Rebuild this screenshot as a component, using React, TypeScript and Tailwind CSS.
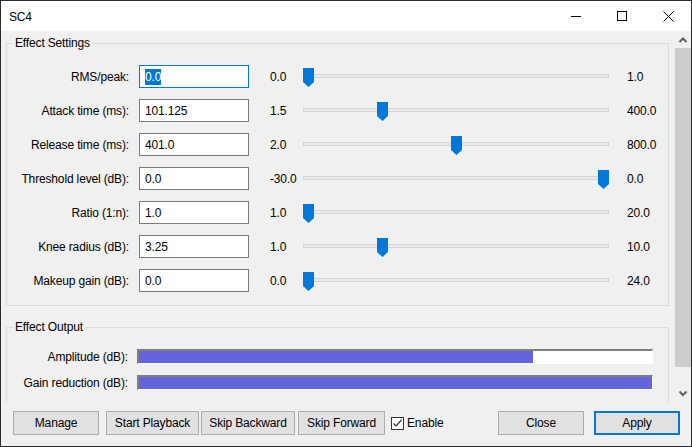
import React from "react";

type Row = { label: string; value: string; min: string; max: string; frac: number; focused?: boolean };

const rows: Row[] = [
  { label: "RMS/peak:", value: "0.0", min: "0.0", max: "1.0", frac: 0, focused: true },
  { label: "Attack time (ms):", value: "101.125", min: "1.5", max: "400.0", frac: 0.25 },
  { label: "Release time (ms):", value: "401.0", min: "2.0", max: "800.0", frac: 0.5 },
  { label: "Threshold level (dB):", value: "0.0", min: "-30.0", max: "0.0", frac: 1 },
  { label: "Ratio (1:n):", value: "1.0", min: "1.0", max: "20.0", frac: 0 },
  { label: "Knee radius (dB):", value: "3.25", min: "1.0", max: "10.0", frac: 0.25 },
  { label: "Makeup gain (dB):", value: "0.0", min: "0.0", max: "24.0", frac: 0 },
];

const Slider: React.FC<{ frac: number }> = ({ frac }) => (
  <div className="relative w-[306px] h-[23px] shrink-0">
    <div className="absolute left-0 right-0 top-[9px] h-[4px] bg-[#e7eaea] border border-[#d6d6d6]" />
    <svg
      className="absolute top-[3px]"
      style={{ left: Math.round(frac * 295) }}
      width="11"
      height="19"
      viewBox="0 0 11 19"
    >
      <polygon points="0,0 11,0 11,14 5.5,19 0,14" fill="#0078d7" />
    </svg>
  </div>
);

const Meter: React.FC<{ label: string; frac: number }> = ({ label, frac }) => (
  <div className="flex items-center h-[15px]">
    <div className="w-[121px] text-right whitespace-nowrap">{label}</div>
    <div className="ml-[9px] w-[516px] h-[15px] border-t-2 border-l-2 border-t-[#7f7f7f] border-l-[#7f7f7f] border-b border-r border-b-white border-r-white bg-white flex">
      <div className="h-full bg-[#6464dc]" style={{ width: `${frac * 100}%` }} />
    </div>
  </div>
);

const Btn: React.FC<{ w: string; children: React.ReactNode; primary?: boolean }> = ({ w, children, primary }) => (
  <button
    className={`${w} h-[24px] shrink-0 bg-[#e1e1e1] flex items-center justify-center ${
      primary ? "border-2 border-[#0078d7]" : "border border-[#adadad]"
    }`}
  >
    {children}
  </button>
);

const Chevron: React.FC<{ up?: boolean }> = ({ up }) => (
  <svg width="16" height="16" viewBox="0 0 16 16">
    <polyline
      points={up ? "4.5,10 8,6.5 11.5,10" : "4.5,6.5 8,10 11.5,6.5"}
      fill="none"
      stroke="#606060"
      strokeWidth="2"
    />
  </svg>
);

export default function App() {
  return (
    <div className="w-[692px] h-[447px] border border-[#2b2b2b] bg-[#f0f0f0] flex flex-col overflow-hidden text-[12px] leading-[16px] tracking-[-0.15px] text-black font-['Segoe_UI','Liberation_Sans',sans-serif]">
      {/* title bar */}
      <div className="h-[30px] bg-white flex items-center shrink-0">
        <span className="pl-[8px] pt-[1px] flex-1">SC4</span>
        <div className="flex h-full">
          <div className="w-[46px] h-full flex items-center justify-center">
            <svg width="10" height="10" viewBox="0 0 10 10">
              <line x1="0" y1="5.5" x2="10" y2="5.5" stroke="#000" strokeWidth="1" />
            </svg>
          </div>
          <div className="w-[46px] h-full flex items-center justify-center">
            <svg width="10" height="10" viewBox="0 0 10 10">
              <rect x="0.5" y="0.5" width="9" height="9" fill="none" stroke="#000" strokeWidth="1" />
            </svg>
          </div>
          <div className="w-[46px] h-full flex items-center justify-center">
            <svg width="11" height="11" viewBox="0 0 11 11">
              <path d="M0.5 0.5 L10.5 10.5 M10.5 0.5 L0.5 10.5" stroke="#000" strokeWidth="1" />
            </svg>
          </div>
        </div>
      </div>

      {/* scrolled body */}
      <div className="h-[371px] flex shrink-0">
        <div className="w-[674px] overflow-hidden">
          <fieldset className="ml-[5px] mt-[4px] w-[663px] border border-[#dcdcdc] px-0 pt-[14px] pb-[13px]">
            <legend className="ml-[6px] px-[2px]">Effect Settings</legend>
            <div className="flex flex-col gap-[11px]">
              {rows.map((r) => (
                <div key={r.label} className="flex items-center h-[23px]">
                  <div className="w-[122px] text-right whitespace-nowrap">{r.label}</div>
                  <div
                    className={`ml-[10px] w-[110px] h-[23px] bg-white border flex items-center px-[5px] shrink-0 ${
                      r.focused ? "border-[#0078d7]" : "border-[#7a7a7a]"
                    }`}
                  >
                    {r.focused ? <span className="bg-[#0078d7] text-white">{r.value}</span> : r.value}
                  </div>
                  <div className="ml-[21px] w-[33px] shrink-0">{r.min}</div>
                  <Slider frac={r.frac} />
                  <div className="ml-[18px]">{r.max}</div>
                </div>
              ))}
            </div>
          </fieldset>

          <fieldset className="ml-[5px] mt-[13px] w-[663px] border border-[#dcdcdc] px-0 pt-[14px] pb-[14px]">
            <legend className="ml-[6px] px-[2px]">Effect Output</legend>
            <div className="flex flex-col gap-[11px]">
              <Meter label="Amplitude (dB):" frac={0.768} />
              <Meter label="Gain reduction (dB):" frac={1} />
            </div>
          </fieldset>
        </div>

        {/* scrollbar */}
        <div className="w-[16px] flex flex-col bg-[#f0f0f0]">
          <div className="h-[17px] flex items-center justify-center">
            <Chevron up />
          </div>
          <div className="h-[319px] bg-[#cdcdcd]" />
          <div className="flex-1 flex items-end justify-center pb-[1px]">
            <Chevron />
          </div>
        </div>
      </div>

      {/* buttons */}
      <div className="flex items-start pt-[9px] pl-[12px] pr-[11px]">
        <Btn w="w-[86px]">Manage</Btn>
        <div className="ml-[7px]">
          <Btn w="w-[93px]">Start Playback</Btn>
        </div>
        <div className="ml-[2px]">
          <Btn w="w-[94px]">Skip Backward</Btn>
        </div>
        <div className="ml-[3px]">
          <Btn w="w-[87px]">Skip Forward</Btn>
        </div>
        <div className="ml-[6px] h-[24px] flex items-center">
          <div className="w-[13px] h-[13px] border border-[#333] bg-white flex items-center justify-center">
            <svg width="11" height="11" viewBox="0 0 11 11">
              <polyline points="1.5,5.5 4,8 9.5,2" fill="none" stroke="#333" strokeWidth="1.2" />
            </svg>
          </div>
          <span className="ml-[3px]">Enable</span>
        </div>
        <div className="ml-auto">
          <Btn w="w-[86px]">Close</Btn>
        </div>
        <div className="ml-[10px]">
          <Btn w="w-[86px]" primary>
            Apply
          </Btn>
        </div>
      </div>
    </div>
  );
}
